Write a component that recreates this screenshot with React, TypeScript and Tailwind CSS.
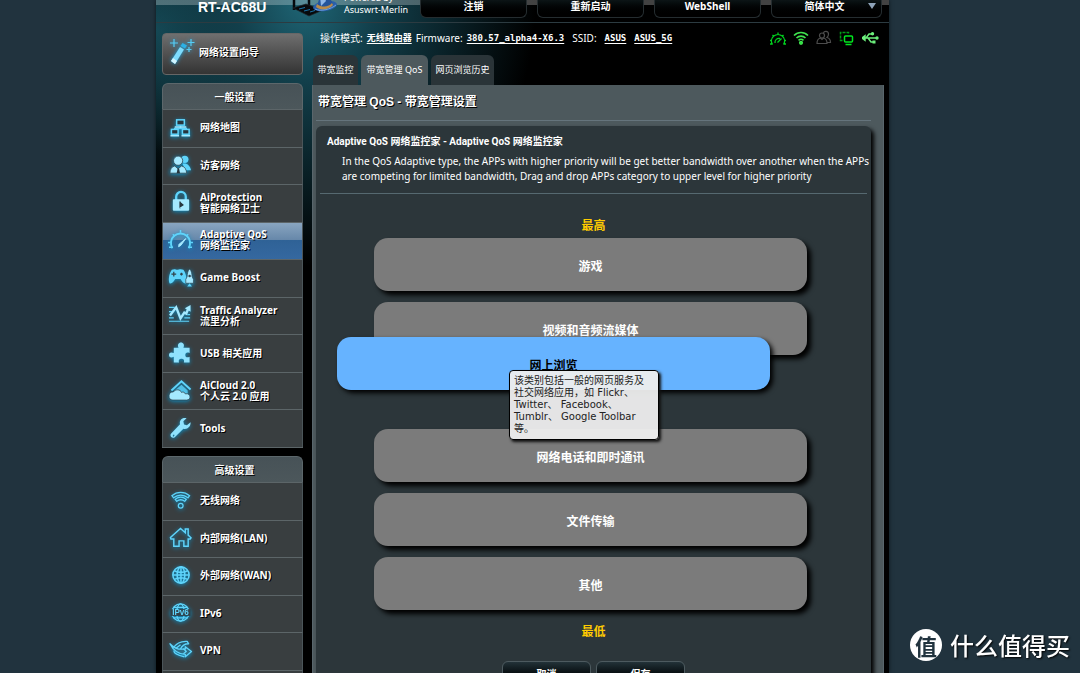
import React from 'react';

interface MenuItem {
  id: string;
  lines: string[];
  icon: React.ReactNode;
}

const menuFont = "font-['Noto_Sans','Noto_Sans_CJK_SC',sans-serif]";
const bodyFont = "font-['Liberation_Sans','Noto_Sans_CJK_SC',sans-serif]";
const headingFont = "font-['Roboto','Noto_Sans_CJK_SC',sans-serif]";

const CYAN = '#5fd4fb';
const PALE = '#a5e9ff';

const generalItems: MenuItem[] = [
  {
    id: 'map',
    lines: ['网络地图'],
    icon: (
      <g fill="#26353d" stroke={CYAN} strokeWidth="1.6">
        <path d="M12 10v3M6 15v-2h12v2" fill="none" />
        <rect x="8" y="4" width="8" height="5.5" />
        <rect x="2.5" y="14" width="7" height="5" />
        <rect x="14" y="14" width="7" height="5" />
        <path d="M6 11.5h12M1.5 20.5h9M13 20.5h9" stroke={PALE} />
      </g>
    ),
  },
  {
    id: 'guest',
    lines: ['访客网络'],
    icon: (
      <g fill={CYAN}>
        <circle cx="16.5" cy="5.5" r="3.8" />
        <path d="M14 10c5-1 8 2 9 7h-6z" />
        <circle cx="9.5" cy="7" r="4.8" stroke="#31424b" strokeWidth=".8" fill={PALE} />
        <path d="M1 20c0-4 2-7 5-7.5l3.5 3 3.5-3c3.5.5 5 3.500 5.500 7.500z" fill={PALE} stroke="#31424b" strokeWidth=".8" />
        <path d="M9 15h1.500l1 5H8z" fill="#26353d" />
      </g>
    ),
  },
  {
    id: 'aiprotection',
    lines: ['AiProtection', '智能网络卫士'],
    icon: (
      <g>
        <path d="M7.5 10V6a5 5 0 0 1 10 0v4" fill="none" stroke={CYAN} strokeWidth="2.4" />
        <rect x="4" y="8.5" width="17" height="12" rx="1" fill={PALE} />
        <path d="M11.5 11v7M11.5 12l3 2.500-3 2z" stroke="#26353d" strokeWidth="1.3" fill="#26353d" />
      </g>
    ),
  },
  {
    id: 'qos',
    lines: ['Adaptive QoS', '网络监控家'],
    icon: (
      <g fill="none" stroke={CYAN}>
        <path d="M3.5 20a10 10 0 1 1 17 0" strokeWidth="2" />
        <path d="M12 1v3M4 5.500l2 2M20 5.500l-2 2M-1 14h3M22 14h3M0 19h4M24 19h-4" strokeWidth="1.5" />
        <path d="M17.500 10l-5 7-2.500 1.500.5-2.500z" stroke={PALE} fill={PALE} />
      </g>
    ),
  },
  {
    id: 'game',
    lines: ['Game Boost'],
    icon: (
      <g fill={CYAN}>
        <path d="M3 4c3-1.500 4 0 5.500 0S12 2.500 15 4c2.500 3 4 10 3 14-2.500 1-4.500-2-6-4.500H6.500C5 16 3 19 .5 18-1 14 .5 7 3 4z" />
        <path d="M21.500 3c2 2 2.500 5 2.500 8l1.500 3v4h-8v-4l1.500-3c0-3 .5-6 2.500-8z" fill={PALE} stroke="#31424b" strokeWidth=".7" />
        <path d="M2.500 8.500h5M5 6v5M11.500 8.500h3M13 7v3" stroke="#31424b" strokeWidth="1.3" />
        <circle cx="21.500" cy="10.500" r="1.3" fill="#31424b" />
        <path d="M19 21.500l2.500-3.500 2.500 3.500z" />
      </g>
    ),
  },
  {
    id: 'traffic',
    lines: ['Traffic Analyzer', '流里分析'],
    icon: (
      <g fill="none" stroke={CYAN}>
        <path d="M0 3.500h6M0 8h3M19 11h3M0 14.500h5M16 14.500h6M0 18h21" strokeWidth="1.3" />
        <path d="M1 12l6.500-8.500L12 15l4-6 2 1 2.500-6" stroke={PALE} strokeWidth="2.5" />
        <path d="M16.500 4.500L22.500 1v7z" fill={PALE} stroke="none" />
      </g>
    ),
  },
  {
    id: 'usb',
    lines: ['USB 相关应用'],
    icon: (
      <path
        d="M5 6h5C8.500 3 10 .5 12.500 .5S16.500 3 15 6h6.500v5.500c-3-1.300-4.500 0-4.500 2s1.500 3.300 4.500 2V21.500h-6c1-3-.8-4-2.500-4s-3.500 1-2.500 4H5v-6C1.500 17 0 15.500 0 13.500s1.500-3.500 5-2z"
        fill="#8fe2fd"
      />
    ),
  },
  {
    id: 'aicloud',
    lines: ['AiCloud 2.0', '个人云 2.0 应用'],
    icon: (
      <g>
        <path d="M2.500 12L13 2.500 22.500 11" fill="none" stroke={CYAN} strokeWidth="2" />
        <path d="M6 12l7-6 6.500 6v7H7z" fill={CYAN} opacity=".8" />
        <path d="M4 22a4 4 0 0 1 .5-8.500c2-3 7.500-3 8.500.5 2-1 3.500 0 4 1.500 5.500-1.500 7 6 1.500 6.500z" fill={PALE} stroke="#31424b" strokeWidth=".8" />
      </g>
    ),
  },
  {
    id: 'tools',
    lines: ['Tools'],
    icon: (
      <path
        d="M22.500 5.500l-3.800 3-3-.8-.7-3.200 3.300-3.300c-4-1.200-8 2-6.800 6.300L2.300 17.300c-2.300 2.500 1.200 6 3.700 3.700l9-8.800c4.500 1.300 8-3 7.500-6.700zM4.800 18.200a1 1 0 1 1-1 1.600z"
        fill="#8fe2fd"
      />
    ),
  },
];

const advancedItems: MenuItem[] = [
  {
    id: 'wireless',
    lines: ['无线网络'],
    icon: (
      <g fill="none" stroke={CYAN} strokeWidth="1.3">
        <path d="M3 7c5.500-4.500 13-4.500 18.500 0l-1.700 2.200c-4.500-3.700-10.500-3.700-15 0zM6.500 10.800c3.500-2.700 8-2.700 11.500 0l-1.600 2c-2.600-2-5.700-2-8.300 0z" />
        <circle cx="12.2" cy="17.5" r="2.5" />
      </g>
    ),
  },
  {
    id: 'lan',
    lines: ['内部网络(LAN)'],
    icon: (
      <path
        d="M5 20V12.500H2L1.500 11 12 1.500 17 6V2h3v6.500l3 2.800-.8 1.200H20V20h-4.500v-5.500h-5V20z"
        fill="none"
        stroke={CYAN}
        strokeWidth="1.5"
      />
    ),
  },
  {
    id: 'wan',
    lines: ['外部网络(WAN)'],
    icon: (
      <g fill="none" stroke={CYAN} strokeWidth="1.6">
        <circle cx="12.5" cy="11.5" r="8.5" />
        <ellipse cx="12.5" cy="11.5" rx="4" ry="8.5" />
        <path d="M4 11.500h17M12.500 3v17M5.500 7c4 2 10 2 14 0M5.500 16c4-2 10-2 14 0" />
      </g>
    ),
  },
  {
    id: 'ipv6',
    lines: ['IPv6'],
    icon: (
      <g fill="none" stroke={CYAN} strokeWidth="1.3">
        <circle cx="12" cy="11" r="9" />
        <ellipse cx="12" cy="11" rx="4" ry="9" />
        <path d="M4.500 5.500h15M4.500 16.500h15" />
        <rect x="1.500" y="7.500" width="21" height="7" fill="#31424b" stroke="none" />
        <text x="12" y="14" textAnchor="middle" fontSize="8.500" fontWeight="700" fontFamily="Liberation Sans, sans-serif" fill={CYAN} stroke="none">
          IPv6
        </text>
      </g>
    ),
  },
  {
    id: 'vpn',
    lines: ['VPN'],
    icon: (
      <g fill="none" stroke={CYAN} strokeWidth="1.4" strokeLinejoin="round">
        <path d="M1 5c3 3 6 5 9 5.500h7V8l6.500 5-6.500 5.500V16c-7 0-12-3-16-11z" fill="#2f6f88" />
        <path d="M4.500 9C8 4 12 2 19 2.500l1.500 2.500c-4 0-7 2-8.500 5.500M12 6l-5 4M5 12c0 3 4 5 11 6.500M15 10l3 3-3 2.500" />
      </g>
    ),
  },
  { id: 'firewall', lines: ['防火墙'], icon: <path d="M12 2l8 4v8l-8 6-8-6V6z" fill={CYAN} /> },
];

const appBars = ['游戏', '视频和音频流媒体', '网上浏览', '网络电话和即时通讯', '文件传输', '其他'];
const DRAGGED = '网上浏览';

const SideMenu: React.FC<{ title: string; items: MenuItem[]; listClass: string; active?: string }> = ({
  title,
  items,
  listClass,
  active,
}) => (
  <section className="shrink-0">
    <h2 className="flex h-[26px] items-center justify-center rounded-t-md border border-b-0 border-[#5c676b] bg-linear-to-b from-[#475257] to-[#4c575b] pl-1 text-[10px] font-bold leading-3 text-white text-shadow-[1px_1px_0_#000]">
      {title}
    </h2>
    <ul className={`grid auto-rows-fr ${listClass}`}>
      {items.map((item) => (
        <li key={item.id} className="grid">
          <a
            href={`#${item.id}`}
            className={`flex items-center gap-2 border border-b-0 border-t-[#5c6568] border-r-[#4b5559] border-l-[#4b5559] pb-px pl-1.5 text-white ${
              item.id === active
                ? 'bg-[linear-gradient(#89a5c0_0%,#6788aa_46%,#2f6296_48%,#3568a0_100%)]'
                : 'bg-[#393e40]'
            }`}
          >
            <svg viewBox="0 0 24 24" className="size-[23px] shrink-0 overflow-visible drop-shadow-[0_1px_2px_#0b8fc4]">
              {item.icon}
            </svg>
            <span className="text-[10px] font-bold leading-[11px] whitespace-nowrap text-shadow-[1px_1px_0_#000]">
              {item.lines.map((line) => (
                <span key={line} className="block">
                  {line}
                </span>
              ))}
            </span>
          </a>
        </li>
      ))}
    </ul>
  </section>
);

const RouterLogo = () => (
  <svg viewBox="0 0 46 22" className="h-[22px] w-[46px] shrink-0">
    <path d="M2 0v14M17 0v17M29 0v12" stroke="#05090c" strokeWidth="2.5" />
    <path d="M1 12l13-4 17 6-14 6z" fill="#07090b" stroke="#1c252b" strokeWidth=".7" />
    <path d="M7 13l6-1.500M12 15l6-1.500M18 16l5-1.500" stroke="#1d8ed0" strokeWidth=".8" />
    <ellipse cx="33" cy="10" rx="12" ry="5" fill="#2a5fa9" transform="rotate(-8 33 10)" />
    <path d="M25 10L28 0h9l4 8c-4 5-12 6-16 2z" fill="#24549c" />
    <path d="M28 0h4l2 5-5 5z" fill="#8fb7e8" />
    <path d="M25 8c5 4 12 3 15-1l1 2c-4 5-13 6-17 2z" fill="#b98b4a" />
    <path d="M23 13c6 3 16 0 21-4" fill="none" stroke="#6fa1dd" />
  </svg>
);

const WandIcon = () => (
  <svg viewBox="0 0 26 26" className="size-[26px] shrink-0 drop-shadow-[0_0_2px_#19a4e0]">
    <path d="M2 22L11 8l4 2.500L6 25z" fill="#7edcfd" />
    <path d="M11.500 7l2-3 4.500 2.500-2 3z" fill="#2cb1e6" />
    <path d="M2 22l2-3 4 3-2 3z" fill="#d2f5ff" />
    <path d="M5 0v8M1 4h8M22 0v7M18.500 3.500h7M20 8v5M17.500 10.500h5" stroke="#57cdf5" strokeWidth="1.2" />
  </svg>
);

const StatusIcons = () => (
  <div className="flex items-center gap-[7px]">
    <svg viewBox="0 0 16 16" className="size-4" fill="none" stroke="#00d21e" strokeWidth="1.3">
      <path d="M2.500 14.500a6.500 6.500 0 1 1 11 0M5 13a4 4 0 0 1 5-4.500M0 10.500h2M14 10.500h2M0 14h2.500M13.500 14H16M8 2.500v2M2.500 5L4 6.500M13.500 5L12 6.500M11.500 8.500l-4 4" />
    </svg>
    <svg viewBox="0 0 16 16" className="size-4" fill="none" stroke="#3fe34e" strokeWidth="1.6">
      <path d="M1 5.500c4-4 10-4 14 0M3.500 8c2.500-2.500 6.500-2.500 9 0M5.500 10.300c1.500-1.300 3.500-1.300 5 0" />
      <circle cx="8" cy="12.800" r="1.300" fill="#00f020" />
    </svg>
    <svg viewBox="0 0 16 16" className="size-4" fill="none" stroke="#4c4c4c" strokeWidth="1.2">
      <circle cx="6" cy="5.500" r="2.500" />
      <path d="M7.500 3.500c0-3 5-3 5 .5 0 1.500-.5 2.500-1.500 3.500 2 .5 3.500 2 3.500 5H11M1 13.500c0-3 1.500-5 3.500-5.500L6 9.500 7.500 8c2 .5 3.500 2.500 3.500 5.500z" />
    </svg>
    <svg viewBox="0 0 16 16" className="size-4" fill="none" stroke="#00e81f" strokeWidth="1.5">
      <rect x="5.500" y="6" width="8" height="6" rx="1" />
      <path d="M6.500 14.500h6" />
      <path d="M3.500 10.500H1.500V2.500h8v2" strokeDasharray="3 1" stroke="#009d18" />
    </svg>
    <svg viewBox="0 0 18 16" className="h-4 w-[18px]" fill="none" stroke="#6cf07c" strokeWidth="1.4">
      <path d="M1 8h14M4 8l3-4h3M6 8l3 4h3" />
      <path d="M0 8l3-2.300v4.600z" fill="#6cf07c" />
      <circle cx="15" cy="8" r="1" fill="#6cf07c" />
      <circle cx="10.500" cy="3.800" r="1" fill="#6cf07c" />
      <path d="M10.500 10.500h3v3h-3z" fill="#6cf07c" stroke="none" />
    </svg>
  </div>
);

const headerButton =
  'flex h-[19px] w-[107px] items-center justify-center rounded-b-md border border-t-0 border-[#252d30] bg-linear-to-b from-[#0e1719] to-black pb-1 text-[10px] font-bold leading-3 text-white';
const infoLink = 'font-bold underline underline-offset-2';
const formButton =
  'h-[26px] w-[89px] rounded-md border border-[#4d5a5f] bg-linear-to-b from-[#233238] to-black';

export default function App() {
  return (
    <div className={`h-screen overflow-hidden bg-[#21333e] pr-[191px] pl-[156px] text-white ${menuFont}`}>
      <div className="flex h-full flex-col bg-black bg-[radial-gradient(ellipse_at_150px_0px,#1f6676_0px,#123f4b_70px,transparent_230px),radial-gradient(ellipse_at_0px_30px,#17505d_0px,transparent_140px)] shadow-[0_0_4px_#0c161c]">
        {/* Header */}
        <header className="flex h-[23px] shrink-0 items-end justify-between border-b border-[#2c3b41] bg-[linear-gradient(rgba(255,255,255,0.26)_0px,rgba(255,255,255,0.26)_5px,transparent_5px)] pr-[7px] pb-1">
          <div className="flex items-end">
            <h1 className={`w-[136px] shrink-0 pb-[3px] pl-[42px] text-[14px] font-bold leading-4 ${bodyFont}`}>RT-AC68U</h1>
            <RouterLogo />
            <p className="pb-0.5 pl-1.5 text-[9px] leading-3">
              Powered by
              <br />
              Asuswrt-Merlin
            </p>
          </div>
          <div className="flex gap-2.5">
            <button className={headerButton}>注销</button>
            <button className={headerButton}>重新启动</button>
            <button className={headerButton}>WebShell</button>
            <div className="relative flex">
              <select
                aria-label="语言"
                className="h-[19px] w-[111px] appearance-none rounded-b-md border border-t-0 border-[#252d30] bg-linear-to-b from-[#0e1719] to-black pr-1 pb-1 text-[10px] font-bold leading-3 text-white [text-align-last:center]"
              >
                <option>简体中文</option>
              </select>
              <svg viewBox="0 0 8 6" className="pointer-events-none absolute top-1 right-1.5 h-1.5 w-2">
                <path d="M0 0h8L4 6z" fill="#8ea3b8" />
              </svg>
            </div>
          </div>
        </header>

        <div className="flex min-h-0 flex-1 gap-[9px] pr-[5px] pl-1.5">
          {/* Sidebar */}
          <aside className="flex w-[141px] shrink-0 flex-col gap-2 pt-[10px]">
            <button className="flex h-[42px] shrink-0 items-center gap-1 rounded-[4px] border border-[#666] bg-linear-to-b from-[#6f6f6f] to-[#343434] pb-1 pl-1.5 text-[10px] font-bold text-white text-shadow-[1px_1px_0_#000]">
              <WandIcon />
              网络设置向导
            </button>
            <SideMenu title="一般设置" items={generalItems} listClass="h-[339px] border-b border-[#5c6568]" active="qos" />
            <SideMenu title="高级设置" items={advancedItems} listClass="h-[225px]" />
          </aside>

          {/* Main column */}
          <main className="flex min-w-0 flex-1 flex-col">
            <div className="flex h-8 shrink-0 items-center justify-between pr-1 pb-0.5 pl-2">
              <div className="flex items-center gap-1 text-[10px] leading-3 whitespace-nowrap">
                <span>操作模式:</span>
                <a href="#mode" className={`text-[9px] ${infoLink}`}>无线路由器</a>
                <span>Firmware:</span>
                <a href="#firmware" className={`mr-1 font-['DejaVu_Sans_Mono',monospace] text-[9px] ${infoLink}`}>380.57_alpha4-X6.3</a>
                <span>SSID:</span>
                <a href="#ssid" className={`mx-1 font-['DejaVu_Sans_Mono',monospace] text-[9px] ${infoLink}`}>ASUS</a>
                <a href="#ssid5g" className={`font-['DejaVu_Sans_Mono',monospace] text-[9px] ${infoLink}`}>ASUS_5G</a>
              </div>
              <StatusIcons />
            </div>

            <nav className="flex h-[30px] shrink-0 gap-[3px] pl-px text-[9px] whitespace-nowrap">
              <a href="#monitor" className="flex w-[45px] items-center justify-center rounded-t-md bg-[#2a3438]">带宽监控</a>
              <a href="#qos-setup" className="flex w-[67px] items-center justify-center rounded-t-md bg-[#4d595d]">带宽管理 QoS</a>
              <a href="#history" className="flex w-[63px] items-center justify-center rounded-t-md bg-[#2a3438]">网页浏览历史</a>
            </nav>

            <div className="flex min-h-0 flex-1 flex-col border-x border-[#59666c] bg-[#4d595d] pr-3 pl-[3px]">
              <h2 className={`ml-0.5 flex h-[35px] shrink-0 items-center pb-0.5 text-[12px] font-bold text-shadow-[1px_1px_0_#000] ${bodyFont}`}>
                带宽管理 QoS - 带宽管理设置
              </h2>
              <div className="mb-[5px] h-px shrink-0 bg-[#65747c]" />

              <div className="h-[600px] shrink-0 rounded-t-md bg-[#2c363a] px-1 shadow-[3px_3px_4px_#000]">
                <div className="border-b border-[#566970] pt-2.5 pb-[9px]">
                  <h3 className={`pl-[7px] text-[10px] font-bold leading-3 ${headingFont}`}>
                    Adaptive QoS 网络监控家 - Adaptive QoS 网络监控家
                  </h3>
                  <p className="mt-1.5 pl-[22px] text-[10px] leading-[15px] whitespace-nowrap">
                    In the QoS Adaptive type, the APPs with higher priority will be get better bandwidth over another when the APPs
                    <br />
                    are competing for limited bandwidth, Drag and drop APPs category to upper level for higher priority
                  </p>
                </div>

                <p className="pt-6 text-center text-[12px] font-bold leading-4 text-[#fc0]">最高</p>

                {/* Priority list */}
                <ul className="mt-1 flex flex-col gap-[11px] pr-[60px] pl-[54px]">
                  {appBars.map((name) =>
                    name === DRAGGED ? (
                      <li key={name} className="relative z-10 h-[52px]">
                        <div className="absolute top-[-29px] right-[37px] left-[-37px] flex h-[53px] items-center justify-center rounded-[14px] bg-[#66b3ff] pt-1 text-[12px] font-bold text-black shadow-[3px_3px_5px_#000]">
                          {name}
                        </div>
                        <div
                          role="tooltip"
                          className="absolute top-1 left-[135px] w-[150px] rounded-[4px] border border-black bg-[#eee]/95 py-1 pr-2.5 pl-1 font-['DejaVu_Sans','Noto_Sans_CJK_SC',sans-serif] text-[10px] leading-3 text-[#222] shadow-[2px_2px_3px_#111]"
                        >
                          该类别包括一般的网页服务及社交网络应用，如 Flickr、 Twitter、 Facebook、 Tumblr、 Google Toolbar 等。
                        </div>
                      </li>
                    ) : (
                      <li
                        key={name}
                        className="flex h-[53px] items-center justify-center rounded-[14px] bg-[#7b7b7b] pt-1 text-[12px] font-bold shadow-[4px_4px_5px_#000]"
                      >
                        {name}
                      </li>
                    ),
                  )}
                </ul>

                <p className="pt-3.5 text-center text-[12px] font-bold leading-4 text-[#fc0]">最低</p>
                <div className="mt-[21px] flex justify-center gap-[5px] text-[10px] font-bold">
                  <button className={formButton}>取消</button>
                  <button className={formButton}>保存</button>
                </div>
              </div>
            </div>
          </main>
        </div>
      </div>

      {/* Site mark in the corner */}
      <div className="fixed right-[10px] bottom-[12px] flex items-center gap-2 font-['Noto_Sans_CJK_SC',sans-serif]">
        <span className="flex size-8 items-center justify-center rounded-full bg-white text-[22px] font-bold leading-8 text-[#21333e]">
          值
        </span>
        <span className="text-[24px] font-medium leading-8 text-shadow-[1px_1px_2px_#000]">什么值得买</span>
      </div>
    </div>
  );
}
